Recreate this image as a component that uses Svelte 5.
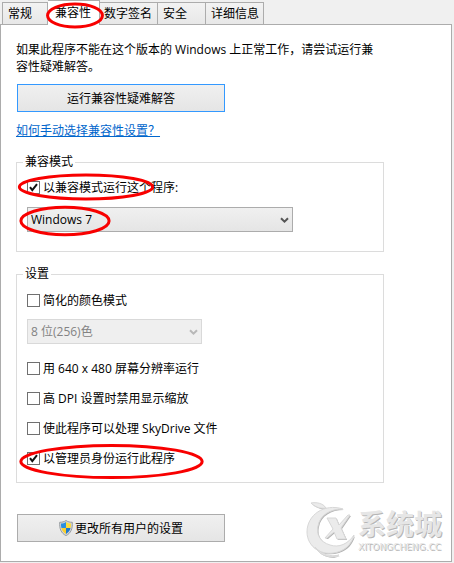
<script>
  const tabs = [
    { id: 'general', label: '常规' },
    { id: 'compat', label: '兼容性' },
    { id: 'sign', label: '数字签名' },
    { id: 'security', label: '安全' },
    { id: 'details', label: '详细信息' }
  ];

  let active = $state('compat');
  let compatMode = $state(true);
  let reducedColor = $state(false);

  let options = $state([
    { id: 'res', label: '用 640 x 480 屏幕分辨率运行', on: false },
    { id: 'dpi', label: '高 DPI 设置时禁用显示缩放', on: false },
    { id: 'sky', label: '使此程序可以处理 SkyDrive 文件', on: false },
    { id: 'admin', label: '以管理员身份运行此程序', on: true, marked: true }
  ]);
</script>

{#snippet tick()}
  <svg class="tick" viewBox="0 0 13 13" aria-hidden="true">
    <path d="M3 6.2 L5.3 9.2 L10 3.2" fill="none" stroke="#111" stroke-width="2" />
  </svg>
{/snippet}

{#snippet ring(name)}
  <svg class="ring {name}" aria-hidden="true">
    <ellipse cx="50%" cy="50%" rx="49%" ry="46%" />
  </svg>
{/snippet}

{#snippet chevron()}
  <svg class="chevron" viewBox="0 0 9 7" aria-hidden="true">
    <path d="M1 1.2 L4.5 4.7 L8 1.2" fill="none" stroke="currentColor" stroke-width="2" />
  </svg>
{/snippet}

<div class="dialog">
  <div class="tabs" role="tablist">
    {#each tabs as t}
      <button class="tab {t.id}" class:active={active === t.id} role="tab"
              aria-selected={active === t.id} onclick={() => (active = t.id)}>
        {t.label}
        {#if t.id === 'compat'}{@render ring('r-tab')}{/if}
      </button>
    {/each}
  </div>

  <div class="panel" role="tabpanel">
    <p class="intro">如果此程序不能在这个版本的 Windows 上正常工作，请尝试运行兼容性疑难解答。</p>
    <button class="btn primary">运行兼容性疑难解答</button>
    <a class="help" href="#help">如何手动选择兼容性设置？</a>

    <fieldset class="mode">
      <legend>兼容模式</legend>
      <div class="row">
        <label class="check">
          <span class="box"><input type="checkbox" bind:checked={compatMode} />{@render tick()}</span>
          以兼容模式运行这个程序:
        </label>
        {@render ring('r-mode')}
      </div>
      <div class="drop wide">
        <select aria-label="兼容模式"><option>Windows 7</option></select>
        {@render chevron()}
        {@render ring('r-os')}
      </div>
    </fieldset>

    <fieldset class="settings">
      <legend>设置</legend>
      <div class="row">
        <label class="check">
          <span class="box"><input type="checkbox" bind:checked={reducedColor} />{@render tick()}</span>
          简化的颜色模式
        </label>
      </div>
      <div class="drop narrow">
        <select aria-label="颜色模式" disabled={!reducedColor}><option>8 位(256)色</option></select>
        {@render chevron()}
      </div>
      <div class="options">
        {#each options as o}
          <div class="row">
            <label class="check">
              <span class="box"><input type="checkbox" bind:checked={o.on} />{@render tick()}</span>
              {o.label}
            </label>
            {#if o.marked}{@render ring('r-admin')}{/if}
          </div>
        {/each}
      </div>
    </fieldset>

    <button class="btn all">
      <svg class="shield" viewBox="0 0 14 16" aria-hidden="true">
        <clipPath id="shield-in"><path d="M7 2 C8.6 3.1 10.2 3.5 12 3.6 C12.2 8.4 10.8 12 7 14 C3.2 12 1.8 8.4 2 3.6 C3.8 3.5 5.4 3.1 7 2 Z" /></clipPath>
        <path d="M7 .5 C8.8 1.8 11 2.3 13.3 2.3 C13.7 8.6 12 13.2 7 15.6 C2 13.2 .3 8.6 .7 2.3 C3 2.3 5.2 1.8 7 .5 Z" fill="#d3d6d9" stroke="#8f9498" stroke-width=".9" />
        <g clip-path="url(#shield-in)">
          <rect width="7" height="8" fill="#2b8fe0" />
          <rect x="7" width="7" height="8" fill="#fddc3c" />
          <rect y="8" width="7" height="8" fill="#fbd02c" />
          <rect x="7" y="8" width="7" height="8" fill="#2078cc" />
        </g>
      </svg>
      更改所有用户的设置
    </button>

    <div class="brand">
      <svg class="logo" viewBox="0 0 50 56" aria-hidden="true">
        {#each ['shade', 'face'] as layer}
          <g class={layer}>
            <path d="M5 2 C10 1 17 2 20 7 C14 8 9 6 5 2 Z" />
            <path d="M37 8 C18 2 1 14 1 31 C1 46 16 56 32 51 C41 48 46 42 48 34 C42 43 33 47 24 44 C14 41 10 33 12 25 C14 14 24 8 37 8 Z" />
            <path d="M9 46 C16 54 25 56 33 54 C25 58 14 55 9 46 Z" />
            <path d="M21 17 H30 L33 24 L42 14 H44 L35 27 L40 38 H31 L28 31 L21 37 H19 L27 28 Z" />
          </g>
        {/each}
      </svg>
      <div class="words">
        <span class="cn">系统城</span>
        <span class="en">XITONGCHENG.CC</span>
      </div>
    </div>
  </div>
</div>

<style>
  :global(body) { margin: 0; background: #f0f0f0; }
  .dialog, .dialog button, .dialog select { font: 12px/17px "Open Sans", "Noto Sans CJK SC", sans-serif; color: #000; }
  .dialog { padding-right: 2px; }

  .tabs { display: flex; align-items: flex-end; height: 24px; padding-left: 2px; }
  .tab { position: relative; box-sizing: border-box; height: 22px; padding: 0 0 0 5px; border: 1px solid #acacac; border-bottom: 0; border-left-width: 0; background: linear-gradient(#f2f2f2, #e8e8e8); text-align: left; white-space: nowrap; }
  .general { width: 46px; border-left-width: 1px; }
  .compat { width: 52px; }
  .sign { width: 58px; padding-left: 4px; }
  .security { width: 48px; }
  .details { width: 58px; }
  .dialog .tab.active { height: 25px; margin-bottom: -1px; padding: 0 0 2px 7px; background: #fff; z-index: 1; }

  .panel { position: relative; display: flex; flex-direction: column; align-items: flex-start; padding: 16px 15px 19px; border: 1px solid #acacac; background: #fff; }
  .intro { max-width: 368px; margin: 0; }
  .btn { box-sizing: border-box; display: flex; align-items: center; justify-content: center; gap: 2px; width: 208px; height: 28px; margin-left: 1px; padding: 0; border: 1px solid #acacac; background: linear-gradient(#f0f0f0, #e5e5e5); }
  .dialog .primary { margin-top: 9px; border-color: #3399ff; }
  .all { margin-top: 31px; }
  .shield { width: 14px; height: 16px; }
  .help { margin-top: 10px; line-height: 18px; color: #0066cc; }

  fieldset { box-sizing: border-box; width: 100%; max-width: 368px; min-width: 0; margin: 14px 0 0; border: 1px solid #dcdcdc; }
  .mode { padding: 8px 10px 19px; }
  .settings { padding: 9px 10px 15px; }
  legend { margin-left: -4px; padding: 0 2px; line-height: 16px; }

  .row { position: relative; }
  .check { display: flex; align-items: center; gap: 3px; height: 18px; width: fit-content; }
  .box { position: relative; display: flex; }
  .box input { appearance: none; box-sizing: border-box; width: 13px; height: 13px; margin: 0; border: 1px solid #707070; background: #fff; }
  .tick { position: absolute; inset: 0; width: 13px; height: 13px; visibility: hidden; pointer-events: none; }
  .box input:checked + .tick { visibility: visible; }

  .drop { position: relative; height: 25px; color: #555; }
  .wide { max-width: 266px; margin-top: 11px; }
  .narrow { max-width: 175px; margin-top: 10px; color: #b8b8b8; }
  .drop select { appearance: none; box-sizing: border-box; width: 100%; height: 25px; padding: 0 20px 0 3px; border: 1px solid #acacac; border-radius: 0; background: linear-gradient(#f0f0f0, #e5e5e5); }
  .drop select:disabled { border-color: #d9d9d9; background: #efefef; color: #838383; opacity: 1; }
  .chevron { position: absolute; right: 4px; top: 10px; width: 9px; height: 7px; pointer-events: none; }

  .options { display: flex; flex-direction: column; gap: 12px; margin-top: 15px; }

  .ring { position: absolute; overflow: visible; pointer-events: none; z-index: 2; }
  .ring ellipse { fill: none; stroke: #f80000; stroke-width: 3; }
  .r-tab { left: -1px; top: 2px; width: 56px; height: 25px; }
  .r-mode { left: -9px; top: -4px; width: 136px; height: 26px; }
  .r-os { left: -7px; top: -1px; width: 90px; height: 30px; }
  .r-admin { left: -8px; top: -5px; width: 185px; height: 35px; }

  .brand { position: absolute; right: 9px; bottom: 4px; display: flex; align-items: flex-end; gap: 2px; }
  .logo { width: 50px; height: 56px; overflow: visible; }
  .shade { fill: #b4b4b4; transform: translate(1px, 1px); }
  .face { fill: #ebebeb; stroke: #d8d8d8; stroke-width: 1; }
  .words { display: flex; flex-direction: column; gap: 3px; padding-bottom: 4px; color: #e6e6e6; text-shadow: 1px 1px 0 #b5b5b5; }
  .cn { font-size: 28px; line-height: 28px; font-weight: 700; }
  .en { font: 400 9px/12px "DejaVu Sans", sans-serif; }
</style>
